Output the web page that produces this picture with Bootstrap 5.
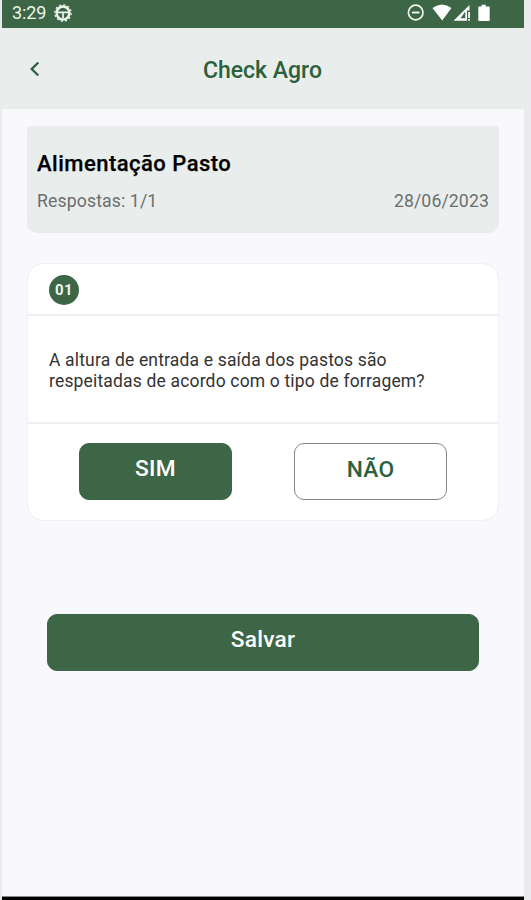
<!DOCTYPE html>
<html lang="pt-BR">
<head>
<meta charset="utf-8">
<meta name="viewport" content="width=device-width, initial-scale=1">
<title>Check Agro</title>
<link href="https://cdn.jsdelivr.net/npm/bootstrap@5.3.0/dist/css/bootstrap.min.css" rel="stylesheet">
<style>
  :root { --agro: #3c6645; --mist: #e9eeed; --line: #f0f0f3; }
  body { background: #ebebed; font-family: Roboto, "Noto Sans", sans-serif; color: #000; line-height: 1.2; }
  .screen { width: 522px; height: 900px; margin-left: 2px; background: #f8f8fd; }
  .status-bar { height: 28px; background: var(--agro); color: #eef5ee; padding: 0 32px 2px 10px; font-size: 18px; }
  .clock { letter-spacing: -.1px; }
  .gear { margin-left: 8px; }
  .title-bar { height: 81px; background: var(--mist); color: #2b613c; padding: 0 26px 0 25px; }
  .title-bar h1 { font-size: 23px; font-weight: 500; letter-spacing: 0; margin: 0; padding-top: 4px; }
  .back { width: 15px; color: #2b613c; line-height: 0; }
  .page { padding: 17px 25px 0; }
  .summary { height: 107px; background: var(--mist); border-radius: 4px 4px 10px 10px; padding: 24px 10px 0 10px; }
  .summary h2 { font-size: 22px; font-weight: 500; line-height: 27px; letter-spacing: .48px; margin: 0 0 12px; -webkit-text-stroke: .25px #000; }
  .meta { font-size: 17.7px; line-height: 25px; color: #6b6f6e; letter-spacing: .1px; }
  .question { margin-top: 30px; height: 258px; border: 1px solid var(--line); border-radius: 16px; background: #fff; }
  .q-head { height: 52px; border-bottom: 2px solid var(--line); background: none; padding: 1px 21px 0; }
  .q-num { width: 30px; height: 30px; background: var(--agro); color: #eef5ee; font-size: 15px; font-weight: 700; letter-spacing: .3px; padding-top: 1px; }
  .q-text { height: 108px; flex: none; border-bottom: 2px solid var(--line); padding: 34px 21px 0; font-size: 17.5px; line-height: 21px; color: #333; letter-spacing: .17px; }
  .q-foot { flex: 1; padding: 19px 51px 0; }
  .btn { height: 57px; border-radius: 10px; font-size: 22.7px; font-weight: 500; line-height: 26px; letter-spacing: .25px; }
  .answer { width: 153px; }
  .btn-agro, .btn-agro:hover { background: var(--agro); border-color: var(--agro); color: #fff; padding-bottom: 12px; }
  .btn-plain, .btn-plain:hover { background: #fff; border-color: #858585; color: #2b613c; padding-bottom: 9px; }
  .save { margin: 93px 20px 0; width: 432px; }
  .nav-strip { height: 4px; background: #000; border-top: 1px solid #888; }
</style>
</head>
<body>
<div class="screen d-flex flex-column overflow-hidden">
  <div class="status-bar d-flex align-items-center justify-content-between">
    <div class="d-flex align-items-center">
      <span class="clock">3:29</span>
      <svg class="gear" width="18" height="20" viewBox="0 0 18 20" fill="none" stroke="#eef5ee">
        <circle cx="9" cy="10" r="6.4" stroke-width="2.500"/>
        <circle cx="9" cy="10" r="8.200" stroke-width="1.200" stroke-dasharray="2.150 2.144"/>
        <path d="M3 9.300h12M9 10v5" stroke-width="1.700"/>
      </svg>
    </div>
    <svg width="85" height="20" viewBox="0 0 85 20" fill="#fff">
      <circle cx="8.700" cy="9.500" r="7.300" fill="none" stroke="#eef5ee" stroke-width="1.700"/>
      <path d="M5 8.600h7.500v1.800H5z"/>
      <path d="M25.500 5Q35 -2 44.500 5L35.200 17.500z"/>
      <path fill-rule="evenodd" d="M46.500 17.800 62.500 2V7.500H60V17.800zM53.500 15.200H58.300V8.500z"/>
      <path d="M61.200 9h1.700v6h-1.700zM61.200 16h1.700v1.800h-1.700z"/>
      <path d="M71.500 3.600H74.600V1.800h4.200v1.800H82q.700 0 .700.700V17.300q0 .700-.700.700H72q-.700 0-.700-.700V4.300q0-.700.700-.700z"/>
    </svg>
  </div>
  <header class="title-bar d-flex align-items-center justify-content-between">
    <a class="back" href="#" aria-label="Voltar">
      <svg width="15" height="18" viewBox="0 0 15 18" fill="none" stroke="#2b613c" stroke-width="2.3"><path d="M11.300 2.500 4.700 9l6.600 6.500"/></svg>
    </a>
    <h1>Check Agro</h1>
    <span class="back"></span>
  </header>
  <main class="page flex-grow-1">
    <section class="summary">
      <h2>Alimentação Pasto</h2>
      <div class="meta d-flex justify-content-between"><span>Respostas: 1/1</span><span>28/06/2023</span></div>
    </section>
    <section class="question card">
      <div class="q-head d-flex align-items-center">
        <span class="q-num rounded-circle d-flex align-items-center justify-content-center">01</span>
      </div>
      <div class="q-text">A altura de entrada e saída dos pastos são<br>respeitadas de acordo com o tipo de forragem?</div>
      <div class="q-foot d-flex justify-content-between">
        <button class="btn btn-agro answer" type="button">SIM</button>
        <button class="btn btn-plain answer" type="button">NÃO</button>
      </div>
    </section>
    <button class="btn btn-agro save" type="button">Salvar</button>
  </main>
  <div class="nav-strip"></div>
</div>
<script src="https://cdn.jsdelivr.net/npm/bootstrap@5.3.0/dist/js/bootstrap.bundle.min.js"></script>
</body>
</html>
